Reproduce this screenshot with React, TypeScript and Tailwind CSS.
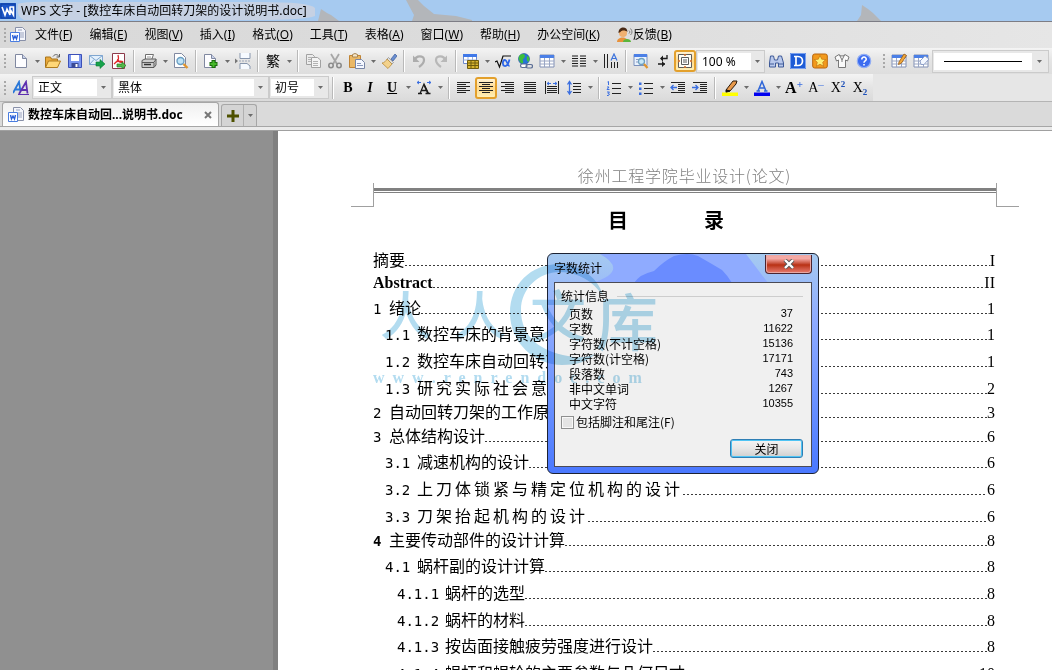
import type { ReactNode } from 'react';

const menus = [
  { label: '文件', accel: 'F' },
  { label: '编辑', accel: 'E' },
  { label: '视图', accel: 'V' },
  { label: '插入', accel: 'I' },
  { label: '格式', accel: 'O' },
  { label: '工具', accel: 'T' },
  { label: '表格', accel: 'A' },
  { label: '窗口', accel: 'W' },
  { label: '帮助', accel: 'H' },
  { label: '办公空间', accel: 'K' },
];

const toc = [
  { num: '', title: '摘要', page: 'I', row: 'h-6', indent: '' },
  { num: '', title: 'Abstract', page: 'II', row: 'h-6', indent: '', latin: true },
  { num: '1', title: '绪论', page: '1', row: 'h-6', indent: '' },
  { num: '1.1', title: '数控车床的背景意义', page: '1', row: 'h-[26px]', indent: 'pl-3' },
  { num: '1.2', title: '数控车床自动回转刀架', page: '1', row: 'h-[27px]', indent: 'pl-3' },
  { num: '1.3', title: '研究实际社会意义', page: '2', row: 'h-[27px]', indent: 'pl-3', spaced: true },
  { num: '2', title: '自动回转刀架的工作原理', page: '3', row: 'h-6', indent: '' },
  { num: '3', title: '总体结构设计', page: '6', row: 'h-6', indent: '' },
  { num: '3.1', title: '减速机构的设计', page: '6', row: 'h-[26px]', indent: 'pl-3' },
  { num: '3.2', title: '上刀体锁紧与精定位机构的设计', page: '6', row: 'h-[27px]', indent: 'pl-3', spaced: true },
  { num: '3.3', title: '刀架抬起机构的设计', page: '6', row: 'h-[27px]', indent: 'pl-3', spaced: true },
  { num: '4', title: '主要传动部件的设计计算', page: '8', row: 'h-6', indent: '', boldNum: true },
  { num: '4.1', title: '蜗杆副的设计计算', page: '8', row: 'h-[26px]', indent: 'pl-3' },
  { num: '4.1.1', title: '蜗杆的选型', page: '8', row: 'h-[27px]', indent: 'pl-6' },
  { num: '4.1.2', title: '蜗杆的材料', page: '8', row: 'h-[27px]', indent: 'pl-6' },
  { num: '4.1.3', title: '按齿面接触疲劳强度进行设计', page: '8', row: 'h-[26px]', indent: 'pl-6' },
  { num: '4.1.4', title: '蜗杆和蜗轮的主要参数与几何尺寸', page: '10', row: 'h-[27px]', indent: 'pl-6' },
];

const stats = [
  { label: '页数', value: '37' },
  { label: '字数', value: '11622' },
  { label: '字符数(不计空格)', value: '15136' },
  { label: '字符数(计空格)', value: '17171' },
  { label: '段落数', value: '743' },
  { label: '非中文单词', value: '1267' },
  { label: '中文字符', value: '10355' },
];

function Icon({ children }: { children: ReactNode }) {
  return (
    <svg viewBox="0 0 16 16" className="w-4 h-4 shrink-0" fill="none" aria-hidden="true">
      {children}
    </svg>
  );
}

function Tool({ name, active, children }: { name: string; active?: boolean; children: ReactNode }) {
  return (
    <button
      type="button"
      aria-label={name}
      className={
        active
          ? 'w-[22px] h-[22px] shrink-0 flex items-center justify-center rounded-[3px] border-2 border-[#e3a02c] bg-linear-to-b from-[#fff3d6] via-[#ffd98a] to-[#fff0b8]'
          : 'w-[22px] h-[22px] shrink-0 flex items-center justify-center'
      }
    >
      {children}
    </button>
  );
}

function Triangle() {
  return (
    <svg viewBox="0 0 5 3" className="w-[5px] h-[3px] shrink-0" aria-hidden="true">
      <path d="M0 0h5L2.500 3z" fill="#6b6b6b" />
    </svg>
  );
}

function Drop({ name }: { name: string }) {
  return (
    <button type="button" aria-label={name} className="w-[10px] h-[22px] shrink-0 flex items-center justify-center">
      <Triangle />
    </button>
  );
}

function Sep() {
  return (
    <div className="w-2 h-[22px] shrink-0 flex justify-center">
      <div className="w-px bg-[#b9b9b9]" />
      <div className="w-px bg-white" />
    </div>
  );
}

function Grip() {
  return (
    <div className="w-[10px] shrink-0 flex flex-col items-center gap-[2px]">
      <span className="w-[2px] h-[2px] bg-[#a8a8a8]" />
      <span className="w-[2px] h-[2px] bg-[#a8a8a8]" />
      <span className="w-[2px] h-[2px] bg-[#a8a8a8]" />
      <span className="w-[2px] h-[2px] bg-[#a8a8a8]" />
    </div>
  );
}

function Combo({ name, value, width, field }: { name: string; value: string; width: string; field: string }) {
  return (
    <div className={`${width} h-[23px] shrink-0 flex items-center border border-[#cbcbcb] bg-[#e8e8e8] p-px`}>
      <select
        aria-label={name}
        defaultValue={value}
        className={`${field} h-[17px] appearance-none bg-white pl-1 text-[12px] leading-[17px] text-black`}
      >
        <option>{value}</option>
      </select>
      <span className="flex-1 flex justify-center">
        <Triangle />
      </span>
    </div>
  );
}

function Sheet({ x = 2 }: { x?: number }) {
  return (
    <>
      <path d={`M${x}.5 1.5h7l4 4v9h-11z`} fill="#fdfdff" stroke="#8088a0" />
      <path d={`M${x + 7}.5 1.5v4h4`} fill="#c9d2ea" stroke="#8088a0" />
    </>
  );
}

function GridShape() {
  return (
    <>
      <path d="M1 2h14v12H1z" fill="#fff" stroke="#8190b5" />
      <path d="M1 2h14v3H1z" fill="#4b7fe6" />
      <path d="M1 8h14M1 11h14M5.5 5v9M10.5 5v9" stroke="#9aa6c4" />
    </>
  );
}

function DocIcon() {
  return (
    <Icon>
      <path d="M5.5.5h7l3 3v10h-10z" fill="#f4f6fc" stroke="#8890a8" />
      <path d="M8 3h4M10 6h4M10 8h4M10 10h4" stroke="#9aa3bd" />
      <path d="M.5 5.500h9v9h-9z" fill="#fff" stroke="#4a7de0" />
      <path d="M2.500 8l1 4 1.500-3 1.500 3 1-4" stroke="#2b60d8" strokeWidth="1.4" />
    </Icon>
  );
}

function TitleBar() {
  return (
    <header className="relative h-[22px] shrink-0 flex items-center bg-[#a6caf0] border-b border-[#7d7d85]">
      <svg viewBox="0 0 1052 21" preserveAspectRatio="none" className="absolute inset-0 w-full h-[21px]" aria-hidden="true">
        <path d="M18 4Q24 1 60 2h200q50 0 55 6v8q-10 4-60 4H24q-8-3-6-16z" fill="#c6d1e3" />
        <path d="M318 21l3-12 6 4 4 2 8 6z" fill="#b3b6ba" />
        <path d="M406 0h12l6 6 10 8 22 2 16 4v1h-60l2-6z" fill="#b3b6ba" />
        <path d="M857 21l4-6 1-10 6 4 5 4 8 8z" fill="#b3b6ba" />
      </svg>
      <div className="relative flex items-center gap-[5px]">
        <svg viewBox="0 0 16 16" className="w-4 h-4" fill="none" aria-hidden="true">
          <path d="M0 0h16v16H0z" fill="#1c56c8" />
          <path d="M1 1h14v14H1z" stroke="#0f3f9c" />
          <path d="M2 4l3 8 2-6 3 6V4M9.500 4h4v8l-3-5" stroke="#fff" strokeWidth="1.600" />
        </svg>
        <h1 className="text-[12px] leading-4 whitespace-nowrap text-black">WPS 文字 - [数控车床自动回转刀架的设计说明书.doc]</h1>
      </div>
    </header>
  );
}

function MenuBar() {
  return (
    <nav className="h-[26px] shrink-0 flex items-center bg-linear-to-r from-[#d9d9d9] via-[#dcdcdc] to-[#e6e6e6]">
      <Grip />
      <span className="w-[25px] flex items-center">
        <DocIcon />
      </span>
      <div className="flex items-center gap-[17px]">
        {menus.map((m) => (
          <button key={m.accel} type="button" className="text-[12px] leading-4 whitespace-nowrap">
            {m.label}(<span className="underline">{m.accel}</span>)
          </button>
        ))}
        <button type="button" className="text-[12px] leading-4 whitespace-nowrap flex items-center">
          <Icon>
            <circle cx="6" cy="6" r="4" fill="#f0b070" />
            <path d="M1.500 6c0-7 9-7 9-1-2-2-6-2-7 0z" fill="#4a2a14" />
            <path d="M0 15c0-6 11-6 11 0z" fill="#e8913a" />
            <path d="M6 15c0-4 8-4 8 0z" fill="#5bb53c" />
            <path d="M12 6.500c1-1 1-2 0-3M13.500 8c2-2 2-4 0-6.500" stroke="#7d7d7d" />
          </Icon>
          反馈(<span className="underline">B</span>)
        </button>
      </div>
    </nav>
  );
}

function StandardBar() {
  return (
    <div className="h-[26px] shrink-0 flex items-center bg-linear-to-b from-[#f4f4f4] via-[#e4e4e4] to-[#dedede]">
      <Grip />
      <Tool name="新建">
        <Icon><Sheet /></Icon>
      </Tool>
      <Drop name="新建选项" />
      <Tool name="打开">
        <Icon>
          <path d="M.5 14V4h5l1 2h6v8z" fill="#e9a93a" stroke="#a8741a" />
          <path d="M.5 14.500L3.500 8h12l-3 6.500z" fill="#ffd777" stroke="#b07c1f" />
          <path d="M8 3.500c2-3 5-2 6 0M14.500 1v3h-3" stroke="#5c5c5c" />
        </Icon>
      </Tool>
      <Tool name="保存">
        <Icon>
          <path d="M1.500 1.500h13v13h-13z" fill="#7a96f0" stroke="#3c50b8" />
          <path d="M4 2h8v6H4z" fill="#fff" />
          <path d="M4.500 10h7v4.500h-7z" fill="#3a4a94" />
          <path d="M8.500 11h2v3h-2z" fill="#fff" />
        </Icon>
      </Tool>
      <Tool name="发送邮件">
        <Icon>
          <path d="M.5 2.500h13v9H.5z" fill="#e3f0fc" stroke="#7fa6d0" />
          <path d="M.5 2.500l6.500 5 6.500-5M.5 11.500l4.500-5" stroke="#7fa6d0" />
          <path d="M7 9h4V6.500l5 4.500-5 4.500V13H7z" fill="#17a34b" stroke="#0b7a34" strokeWidth=".6" />
        </Icon>
      </Tool>
      <Tool name="输出为 PDF">
        <Icon>
          <path d="M1.500.5h12v15h-12z" fill="#fff" stroke="#8c3a4a" />
          <path d="M7 2c1 4 1 5-4 9M6.500 6c1 3 3 4 6 3M4 9.500c2-1 5-2 8-1" stroke="#e02828" strokeWidth="1.300" />
          <path d="M6 11h5V9l4 3.500-4 3.500v-2H6z" fill="#54b848" stroke="#1f7d24" strokeWidth=".7" />
        </Icon>
      </Tool>
      <Sep />
      <Tool name="打印">
        <Icon>
          <path d="M4.500 7V1.500h8l-2 5.500z" fill="#fff" stroke="#6f6f6f" />
          <path d="M1 7.500l3-1.500h11v6l-2 2.500H1z" fill="#cfcfcf" stroke="#5a5a5a" />
          <path d="M1 9.500h12M13 9.500V14M13 9l2-2.500" stroke="#5a5a5a" />
          <path d="M3 11.500h7" stroke="#333" strokeWidth="1.500" />
          <path d="M6 4h4" stroke="#9a9a9a" />
        </Icon>
      </Tool>
      <Drop name="打印选项" />
      <Tool name="打印预览">
        <Icon>
          <path d="M1.500.5h7l4 4v10h-11z" fill="#fff" stroke="#8088a0" />
          <circle cx="7.500" cy="8" r="3.500" fill="#bfe3f7" stroke="#6a9ec2" strokeWidth="1.400" />
          <path d="M10.500 11l4 4" stroke="#e0952e" strokeWidth="2.400" />
        </Icon>
      </Tool>
      <Sep />
      <Tool name="插入页">
        <Icon>
          <Sheet x={1} />
          <path d="M10.500 7v8M6.500 11h8" stroke="#1a6d0c" strokeWidth="4" />
          <path d="M10.500 8v6M7.500 11h6" stroke="#46b82a" strokeWidth="2" />
        </Icon>
      </Tool>
      <Drop name="插入页选项" />
      <Tool name="分页符">
        <Icon>
          <path d="M5 0v5.500h10V0" fill="#f6faff" stroke="#8796ad" />
          <path d="M5 16v-5.500h7l3 2.500v3" fill="#f6faff" stroke="#8796ad" />
          <path d="M4 8h12" stroke="#9aa5b8" strokeDasharray="2 1" />
          <path d="M0 5.500L3 8l-3 2.500z" fill="#777" />
        </Icon>
      </Tool>
      <Sep />
      <Tool name="繁体">
        <span className="text-[14px] leading-4">繁</span>
      </Tool>
      <Drop name="繁体选项" />
      <Sep />
      <Tool name="复制">
        <Icon>
          <path d="M1.500 1.500h6l2 2v8h-8z" fill="#ececec" stroke="#a2a2a2" />
          <path d="M6.500 4.500h6l3 2.500v7.500h-9z" fill="#f4f4f4" stroke="#a2a2a2" />
          <path d="M3 4.500h3M3 6.500h3M3 8.500h3M8 8.500h5M8 10.500h5M8 12.500h5" stroke="#b2b2b2" />
        </Icon>
      </Tool>
      <Tool name="剪切">
        <Icon>
          <path d="M4 1l6 10M12 1L6 11" stroke="#a6a6a6" strokeWidth="1.800" />
          <circle cx="4" cy="12.500" r="2.200" stroke="#8c8c8c" strokeWidth="1.600" />
          <circle cx="12" cy="12.500" r="2.200" stroke="#8c8c8c" strokeWidth="1.600" />
        </Icon>
      </Tool>
      <Tool name="粘贴">
        <Icon>
          <path d="M.5 2.500h11v12H.5z" fill="#eab867" stroke="#c08434" />
          <path d="M3.500 4V1.500L6 .5l2.500 1V4z" fill="#f6e8cc" stroke="#a88450" />
          <path d="M6.500 6.500h6l3 3v6h-9z" fill="#f5f8ff" stroke="#7886a6" />
          <path d="M8 10.500h4M8 12.500h6" stroke="#8c9abb" />
        </Icon>
      </Tool>
      <Drop name="粘贴选项" />
      <Tool name="格式刷">
        <Icon>
          <path d="M10 6l4-5 2 2-4 5z" fill="#6a8ed0" stroke="#3c5c9c" strokeWidth=".7" />
          <path d="M7.500 4.500l5 5-1.500 1.500-5-5z" fill="#ddd" stroke="#888" strokeWidth=".7" />
          <path d="M6 6l5 5-4 4.500-6-5.500c2 0 4-2 5-4z" fill="#f3d28c" stroke="#b98d3e" strokeWidth=".8" />
        </Icon>
      </Tool>
      <Sep />
      <Tool name="撤消">
        <Icon>
          <path d="M3.500 7.500C5 2 13 2 13 7c0 3-2 5-5 7" stroke="#adadad" strokeWidth="2.200" />
          <path d="M2 2.500v6.500h6.500z" fill="#adadad" />
        </Icon>
      </Tool>
      <Tool name="恢复">
        <Icon>
          <path d="M12.500 7.500C11 2 3 2 3 7c0 3 2 5 5 7" stroke="#b8b8b8" strokeWidth="2.200" />
          <path d="M14 2.500v6.500H7.500z" fill="#b8b8b8" />
        </Icon>
      </Tool>
      <Sep />
      <Tool name="插入表格">
        <Icon>
          <path d="M.5 1.500h13v9H.5z" fill="#fff" stroke="#6b88cc" />
          <path d="M0 1h14v3H0z" fill="#3f78e8" />
          <path d="M.5 7h13M5 4v7M9.500 4v7" stroke="#9ab0dc" />
          <path d="M4.500 7.500h11v8h-11z" fill="#d8b52e" stroke="#6f5c0c" />
          <path d="M4.500 10h11M4.500 12.500h11M8 7.500v8M12 7.500v8" stroke="#6f5c0c" />
        </Icon>
      </Tool>
      <Drop name="插入表格选项" />
      <Tool name="公式">
        <Icon>
          <path d="M0 9l2-1 2.500 6L8 3h8" stroke="#111" strokeWidth="1.200" />
          <path d="M14.500 6.500c-1 4-3 7-5 6.500-2.500-1-2-6 .5-6 2 0 2.500 6 4.500 6" stroke="#2c66e8" strokeWidth="1.800" />
        </Icon>
      </Tool>
      <Tool name="超链接">
        <Icon>
          <circle cx="7" cy="6" r="5.500" fill="#2673d8" stroke="#1c4f94" strokeWidth=".6" />
          <path d="M3 2c3-2 5-1 5 1S5 6 6 8s-1 3-2 2S0 5 3 2zM10 3c2 0 3 3 2 5s-3-1-2-5z" fill="#3cbf3c" />
          <rect x="3.500" y="11" width="6.500" height="3.500" rx="1.700" fill="#fff" stroke="#5d6f96" strokeWidth="1.200" />
          <rect x="9" y="11.500" width="6.500" height="3.500" rx="1.700" stroke="#5d6f96" strokeWidth="1.200" />
        </Icon>
      </Tool>
      <Tool name="表格">
        <Icon><GridShape /></Icon>
      </Tool>
      <Drop name="表格选项" />
      <Tool name="分栏">
        <Icon>
          <path d="M1 3h6M1 5.500h6M1 8h6M1 10.500h6M1 13h6M9 3h6M9 5.500h6M9 8h6M9 10.500h6M9 13h6" stroke="#1b1b1b" strokeWidth="1.200" />
        </Icon>
      </Tool>
      <Drop name="分栏选项" />
      <Tool name="文字方向">
        <Icon>
          <path d="M1.500 1v14M4.500 1v14M8.500 9v6M11.500 9v6M14.500 9v6" stroke="#222" />
          <path d="M8 7.500L11 1l3 6.500M9 5.500h4" stroke="#3e74dc" strokeWidth="1.200" />
        </Icon>
      </Tool>
      <Sep />
      <Tool name="文档结构图">
        <Icon>
          <path d="M1 1.500h13v11H1z" fill="#e9f2fd" stroke="#7a90bd" />
          <path d="M1 1h13v3H1z" fill="#4b7fe6" />
          <path d="M3 6.500h3M3 9h3" stroke="#8a9cc4" />
          <circle cx="8.500" cy="8.500" r="3" fill="#c8e8f8" stroke="#6fa0c0" strokeWidth="1.300" />
          <path d="M11 11l3.500 4" stroke="#e0952e" strokeWidth="2.200" />
        </Icon>
      </Tool>
      <Tool name="显示段落标记">
        <Icon>
          <path d="M12 2v3.500H6M3 11h7" stroke="#1b1b1b" strokeWidth="1.300" />
          <path d="M8 2.500v6L5 5.500zM7 8v6l3-3z" fill="#1b1b1b" />
        </Icon>
      </Tool>
      <Tool name="页面视图" active>
        <Icon>
          <path d="M1.500 1.500h13v13h-13z" fill="#fffdf6" stroke="#5c5c5c" />
          <path d="M4.500 4.500h7v7h-7z" fill="#fff" stroke="#5c5c5c" />
          <path d="M6 7h4M6 9h4" stroke="#5c5c5c" />
          <path d="M7 1l1 2 1-2M7 15l1-2 1 2M1 7l2 1-2 1M15 7l-2 1 2 1" stroke="#d8742c" />
        </Icon>
      </Tool>
      <Combo name="显示比例" value="100 %" width="w-[69px]" field="w-[53px]" />
      <Tool name="查找">
        <Icon>
          <path d="M2.500 3h3l1 4h3l1-4h3l2 7v4h-5v-4h-3v4h-6v-4z" fill="#b9c9ec" stroke="#3f5a98" />
          <path d="M1 11h5M10 11h5" stroke="#3f5a98" />
        </Icon>
      </Tool>
      <Tool name="词典">
        <Icon>
          <path d="M0 0h16v16H0z" fill="#1d5bd6" />
          <path d="M.5.5h15v15H.5z" stroke="#7aa0ee" />
          <path d="M4 3.500h4c6 0 6 9 0 9H4M6 4v8" stroke="#fff" strokeWidth="1.700" />
        </Icon>
      </Tool>
      <Tool name="收藏">
        <Icon>
          <rect x=".7" y="1" width="14.600" height="14" rx="2" fill="#f29a1c" stroke="#b8640c" />
          <path d="M8 2.500l1.700 3.700 4 .4-3 2.700.9 4L8 11.200l-3.600 2.100.9-4-3-2.700 4-.4z" fill="#fff176" stroke="#b8640c" strokeWidth=".6" />
        </Icon>
      </Tool>
      <Tool name="换肤">
        <Icon>
          <path d="M5 1.500L1 4l1.500 4L4.500 7v7.500h7V7l2 1L15 4l-4-2.500c-1 2-5 2-6 0z" fill="#fafafa" stroke="#787878" />
          <path d="M5.500 2l2.500 5 2.500-5M8 7v2" stroke="#787878" />
        </Icon>
      </Tool>
      <Tool name="帮助">
        <Icon>
          <circle cx="8" cy="8" r="6.700" fill="#3c6cf0" stroke="#92aef4" strokeWidth="1.200" />
          <path d="M5.800 6.500c0-3.500 4.700-3 4.400 0-.1 1.500-2.200 1.500-2.200 3.200M8 11v1.600" stroke="#fff" strokeWidth="1.600" />
        </Icon>
      </Tool>
      <span className="w-[13px] pl-1 flex shrink-0">
        <Grip />
      </span>
      <Tool name="绘制表格">
        <Icon>
          <GridShape />
          <path d="M8 9l5-8 2.500 1.500L10.500 10l-3 1.500z" fill="#f0a83c" stroke="#9c5c14" strokeWidth=".8" />
        </Icon>
      </Tool>
      <Tool name="擦除">
        <Icon>
          <GridShape />
          <path d="M7 8l5-5 4 3-5 5.500H8z" fill="#f3f7ff" stroke="#8ea0c8" />
        </Icon>
      </Tool>
      <div className="flex-1 h-[23px] flex items-center border border-[#cbcbcb] bg-[#e8e8e8] p-px mr-[3px]">
        <button type="button" aria-label="线型" className="flex-1 h-[17px] bg-white flex items-center px-[10px]">
          <span className="flex-1 h-px bg-black" />
        </button>
        <span className="w-[15px] flex justify-center">
          <Triangle />
        </span>
      </div>
    </div>
  );
}

function FormatBar() {
  return (
    <div className="h-7 shrink-0 flex bg-[#e6e6e6] border-b border-[#b4b4b4]">
      <div className="flex items-center pr-[2px] bg-linear-to-b from-[#f4f4f4] via-[#e4e4e4] to-[#dadada]">
        <Grip />
        <Tool name="样式">
          <Icon>
            <path d="M0 13L6 2l1.500 9M2 9.500h5" stroke="#2a78d8" strokeWidth="1.800" />
            <path d="M6 14L13 2l1.500 11.500M8.500 10h6" stroke="#5d2fb0" strokeWidth="1.800" />
            <path d="M5 14.500h11" stroke="#5d2fb0" />
          </Icon>
        </Tool>
        <Combo name="样式" value="正文" width="w-[80px]" field="w-[63px]" />
        <Combo name="字体" value="黑体" width="w-[157px]" field="w-[140px]" />
        <Combo name="字号" value="初号" width="w-[60px]" field="w-[43px]" />
        <Sep />
        <Tool name="加粗">
          <b className="font-['Liberation_Serif',serif] text-[14px] leading-4">B</b>
        </Tool>
        <Tool name="倾斜">
          <i className="font-['Liberation_Serif',serif] font-bold text-[14px] leading-4">I</i>
        </Tool>
        <Tool name="下划线">
          <u className="font-['Liberation_Serif',serif] font-bold text-[14px] leading-4">U</u>
        </Tool>
        <Drop name="下划线选项" />
        <Tool name="字符缩放">
          <Icon>
            <path d="M4 13.500L8 4l4.500 9.500" stroke="#1b1b1b" strokeWidth="1.200" />
            <path d="M8 5l4 8.500M5 10.500h6M2 13.500h4M9.500 13.500h5" stroke="#1b1b1b" strokeWidth="1.600" />
            <path d="M1 2.500h4M11 2.500h4M3 1L1 2.500 3 4M13 1l2 1.500L13 4" stroke="#3a6ee0" />
          </Icon>
        </Tool>
        <Drop name="字符缩放选项" />
        <Sep />
        <Tool name="左对齐">
          <Icon><path d="M1 2.500h13M1 4.500h9M1 6.500h13M1 8.500h9M1 10.500h13M1 12.500h9" stroke="#222" /></Icon>
        </Tool>
        <Tool name="居中" active>
          <Icon><path d="M1 2.500h14M4 4.500h8M1 6.500h14M4 8.500h8M1 10.500h14M4 12.500h8" stroke="#222" /></Icon>
        </Tool>
        <Tool name="右对齐">
          <Icon><path d="M1 2.500h13M5 4.500h9M1 6.500h13M5 8.500h9M1 10.500h13M5 12.500h9" stroke="#222" /></Icon>
        </Tool>
        <Tool name="两端对齐">
          <Icon><path d="M2 2.500h12M2 4.500h12M2 6.500h12M2 8.500h12M2 10.500h12M2 12.500h12" stroke="#222" /></Icon>
        </Tool>
        <Tool name="分散对齐">
          <Icon>
            <path d="M1.500 1v13M14.500 1v13M3 6.500h10M3 8.500h10M3 10.500h10M3 12.500h10" stroke="#222" />
            <path d="M3 3.500h4M9 3.500h4M5 2L3 3.500 5 5M11 2l2 1.500L11 5" stroke="#3a6ee0" />
          </Icon>
        </Tool>
        <Tool name="行距">
          <Icon>
            <path d="M7 3.500h8M7 6.500h8M7 9.500h8M7 12.500h8" stroke="#222" />
            <path d="M3.500 2v12M1.500 4.500l2-3 2 3M1.500 11l2 3 2-3" stroke="#3a6ee0" strokeWidth="1.300" />
          </Icon>
        </Tool>
        <Drop name="行距选项" />
        <Sep />
        <Tool name="编号">
          <Icon>
            <path d="M6 3.500h9M6 8.500h9M6 13.500h9" stroke="#222" />
            <path d="M1.500 2l1-.5v3.500M1 7h2L1 9.500h2.500M1 12h2.500L2 13.500l1.500.5-1 1.500H1" stroke="#3a6ee0" />
          </Icon>
        </Tool>
        <Drop name="编号选项" />
        <Tool name="项目符号">
          <Icon>
            <path d="M6 3.500h9M6 8.500h9M6 13.500h9" stroke="#222" />
            <path d="M1 2.500h2.500v2.500H1zM1 7.500h2.500V10H1zM1 12.500h2.500V15H1z" fill="#3a6ee0" />
          </Icon>
        </Tool>
        <Drop name="项目符号选项" />
        <Tool name="减少缩进量">
          <Icon>
            <path d="M1 2.500h14M8 4.500h7M8 6.500h7M8 8.500h7M8 10.500h7M1 12.500h14" stroke="#222" />
            <path d="M7 7.500H1M3.500 5L1 7.500 3.500 10" stroke="#3a6ee0" strokeWidth="1.300" />
          </Icon>
        </Tool>
        <Tool name="增加缩进量">
          <Icon>
            <path d="M1 2.500h14M8 4.500h7M8 6.500h7M8 8.500h7M8 10.500h7M1 12.500h14" stroke="#222" />
            <path d="M0 7.500h6M3.500 5L6 7.500 3.500 10" stroke="#3a6ee0" strokeWidth="1.300" />
          </Icon>
        </Tool>
        <Sep />
        <Tool name="突出显示">
          <Icon>
            <path d="M4 10l7-9h4l-1 3-6 7z" fill="#e8994a" stroke="#2a1a0c" />
            <path d="M4 10l4 1-4 1.500z" fill="#111" stroke="#111" />
            <path d="M0 12.500h16V16H0z" fill="#ffff00" />
          </Icon>
        </Tool>
        <Drop name="突出显示选项" />
        <Tool name="字体颜色">
          <Icon>
            <path d="M4 11L8 1.500 12 11M5 8h6M2.500 11h3.500M10 11h3.500" stroke="#2f66d8" strokeWidth="1.500" />
            <path d="M0 12.500h16V16H0z" fill="#0000f0" />
          </Icon>
        </Tool>
        <Drop name="字体颜色选项" />
        <Tool name="增大字号">
          <span className="flex items-start font-['Liberation_Serif',serif] font-bold text-[16px] leading-4">
            A<span className="text-[11px] leading-[8px] text-[#3a6ee0]">+</span>
          </span>
        </Tool>
        <Tool name="减小字号">
          <span className="flex items-start font-['Liberation_Serif',serif] text-[14px] leading-4">
            A<span className="text-[11px] leading-[8px] text-[#3a6ee0]">–</span>
          </span>
        </Tool>
        <Tool name="上标">
          <span className="flex items-start font-['Liberation_Serif',serif] text-[14px] leading-4">
            X<span className="text-[9px] leading-[8px] font-bold text-[#1c4fb8]">2</span>
          </span>
        </Tool>
        <Tool name="下标">
          <span className="flex items-end font-['Liberation_Serif',serif] text-[14px] leading-4">
            X<span className="text-[9px] leading-[8px] font-bold text-[#1c4fb8]">2</span>
          </span>
        </Tool>
      </div>
    </div>
  );
}

function TabStrip() {
  return (
    <div className="h-[29px] shrink-0 flex flex-col bg-[#dadada]">
      <div className="flex-1 flex items-end border-b border-[#a6a6a6] pl-[2px]">
        <div className="w-[217px] h-6 flex items-center gap-1 rounded-t-[3px] border border-b-0 border-[#a6a6a6] bg-linear-to-b from-[#f0f0f0] to-white pl-[5px] pr-[5px]">
          <DocIcon />
          <button type="button" className="flex-1 text-left text-[12px] leading-4 font-bold whitespace-nowrap">
            数控车床自动回...说明书.doc
          </button>
          <button type="button" aria-label="关闭标签" className="w-[10px] h-[10px] flex items-center justify-center">
            <svg viewBox="0 0 8 8" className="w-2 h-2" aria-hidden="true">
              <path d="M1 1l6 6M7 1L1 7" stroke="#777" strokeWidth="2" />
            </svg>
          </button>
        </div>
        <div className="ml-[2px] h-[22px] flex rounded-t-[3px] border border-b-0 border-[#a6a6a6] bg-[#d4d4d4]">
          <button type="button" aria-label="新建标签" className="w-[22px] flex items-center justify-center border-r border-[#b0b0b0]">
            <svg viewBox="0 0 12 12" className="w-3 h-3" aria-hidden="true">
              <path d="M6 0v12M0 6h12" stroke="#4f5200" strokeWidth="3" />
            </svg>
          </button>
          <button type="button" aria-label="标签列表" className="w-3 flex items-center justify-center">
            <Triangle />
          </button>
        </div>
      </div>
      <div className="h-1 bg-[#ebebeb] border-b border-[#a0a0a0]" />
    </div>
  );
}

function DocumentPage() {
  return (
    <article className="flex-1 min-w-0 bg-white pt-[37px] text-black">
      <p className="pl-[95px] pr-14 text-center text-[16px] leading-[15px] tracking-wider text-[#808080] font-light">
        徐州工程学院毕业设计(论文)
      </p>
      {/* page margin marks with the double header rule between them */}
      <div className="h-6 flex pl-[73px] pr-[33px]">
        <div className="w-[23px] border-b border-r border-[#a0a0a0]" />
        <div className="flex-1 pt-[5px]">
          <div className="h-[5px] border-t-[3px] border-b border-[#808080]" />
        </div>
        <div className="w-[23px] border-b border-l border-[#a0a0a0]" />
      </div>
      <h2 className="h-[26px] mb-[14px] pl-[95px] pr-[93px] flex justify-center gap-[76px] text-[20px] leading-[26px] font-bold">
        <span>目</span>
        <span>录</span>
      </h2>
      <ol className="pl-[95px] pr-14">
        {toc.map((item) => (
          <li key={item.title} className={`${item.row} ${item.indent} flex items-end`}>
            <div className="flex-1 h-6 flex items-baseline text-[16px] leading-6 whitespace-nowrap">
              {item.num && (
                <span
                  className={`${item.num.length === 1 ? 'w-4' : item.num.length === 3 ? 'w-8' : 'w-12'} ${
                    item.boldNum ? 'font-bold' : ''
                  } font-['DejaVu_Sans_Mono',monospace] text-[14px]`}
                >
                  {item.num}
                </span>
              )}
              <span
                className={
                  item.latin
                    ? "font-['Liberation_Serif',serif] font-bold"
                    : item.spaced
                      ? 'tracking-[3px]'
                      : ''
                }
              >
                {item.title}
              </span>
              <span className="flex-1 h-px bg-[repeating-linear-gradient(90deg,#3a3a3a_0_2px,transparent_2px_4px)]" />
              <span className="pr-px font-['Liberation_Serif',serif]">{item.page}</span>
            </div>
          </li>
        ))}
      </ol>
    </article>
  );
}

function WordCountDialog() {
  return (
    <section
      role="dialog"
      aria-label="字数统计"
      className="absolute left-[547px] top-[122px] w-[272px] overflow-hidden rounded-[6px] border border-[#1c2233] bg-linear-to-b from-[#a6caf0] via-[#8fabff] via-30% to-[#4a78ff] px-[6px] pt-px pb-[6px]"
    >
      <svg viewBox="0 0 270 29" className="absolute left-0 top-0 w-[270px] h-[29px]" aria-hidden="true">
        <path d="M52 0h146l22 29H44q38-12 8-29z" fill="#8fabff" />
        <path d="M86 29q6-9 20-12 10-10 20-15 14-4 24 0 14 8 24 14 6 6 10 13z" fill="#6a8cff" />
      </svg>
      <header className="relative h-[27px] flex items-start justify-between">
        <h3 className="pt-[5px] text-[12px] leading-4">字数统计</h3>
        <button
          type="button"
          aria-label="关闭窗口"
          className="w-[47px] h-[19px] flex items-center justify-center rounded-b-[4px] border border-t-0 border-[#4a2430] bg-linear-to-b from-[#f4a8a4] from-20% via-[#b83010] via-55% to-[#e87c70] shadow-[inset_0_0_0_1px_#e8a8a4]"
        >
          <svg viewBox="0 0 12 10" className="w-3 h-[10px]" aria-hidden="true">
            <path d="M2 1l8 8M10 1L2 9" stroke="#555" strokeWidth="4" />
            <path d="M2 1l8 8M10 1L2 9" stroke="#fff" strokeWidth="2.400" />
          </svg>
        </button>
      </header>
      <div className="relative border border-[#4a4a55] bg-[#f0f0f0] pt-[5px] pl-[6px] pr-2 pb-2">
        <div className="flex items-center gap-2 text-[12px] leading-4">
          统计信息
          <span className="flex-1 h-px bg-[#cdcdcd]" />
        </div>
        <table className="w-full mt-[2px] text-[12px]">
          <tbody>
            {stats.map((s) => (
              <tr key={s.label} className="h-[15px] leading-[15px]">
                <th scope="row" className="p-0 pl-2 text-left font-normal">{s.label}</th>
                <td className="p-0 pr-[10px] text-right font-['Liberation_Sans',sans-serif] text-[11px]">{s.value}</td>
              </tr>
            ))}
          </tbody>
        </table>
        <label className="mt-[3px] flex items-center gap-[2px] text-[12px] leading-4">
          <input type="checkbox" className="w-[13px] h-[13px] appearance-none border border-[#8e8f8f] bg-[#e4e4e4] shadow-[inset_0_0_0_1px_#f8f8f8]" />
          包括脚注和尾注(F)
        </label>
        <div className="mt-[9px] flex justify-end">
          <button
            type="button"
            className="w-[73px] h-[19px] flex items-center justify-center rounded-[3px] border border-[#2f7fb5] bg-linear-to-b from-[#f4f4f4] via-[#e6e6e6] to-[#cfcfcf] text-[12px] leading-4 shadow-[inset_0_0_0_1px_#4fc4f4]"
          >
            关闭
          </button>
        </div>
      </div>
    </section>
  );
}

function Watermark() {
  return (
    <svg
      viewBox="0 0 290 130"
      className="absolute left-[370px] top-[122px] w-[290px] h-[130px] pointer-events-none mix-blend-multiply"
      fill="#b3dcf0"
      aria-hidden="true"
    >
      <path d="M233 43C228 22 206 11 190 11C160 11 140 32 140 60C140 90 165 112 192 112C206 112 217 109 225 101C216 105 208 105 198 103C170 98 151 84 151 57C151 36 168 19 190 19C208 19 223 28 233 43z" />
      <g fontFamily="'Noto Sans CJK SC', sans-serif" fontWeight="500">
        <text x="10" y="82" fontSize="52">人</text>
        <text x="84" y="82" fontSize="52">人</text>
        <text x="160" y="84" fontSize="56">文</text>
        <text x="226" y="93" fontSize="62">库</text>
      </g>
      <text x="3" y="130" fontFamily="'Liberation Serif', serif" fontSize="16" fontWeight="bold" xmlSpace="preserve">
        w  w  w  .  r  e  n  r  e  n  d  o  c  .  c  o  m
      </text>
    </svg>
  );
}

export default function App() {
  return (
    <div className="h-screen flex flex-col overflow-hidden bg-[#909090] text-black font-['Noto_Sans','Noto_Sans_CJK_SC',sans-serif]">
      <TitleBar />
      <MenuBar />
      <StandardBar />
      <FormatBar />
      <TabStrip />
      <main className="relative flex-1 min-h-0 flex overflow-hidden font-['Noto_Sans_CJK_SC',sans-serif]">
        <div className="w-[278px] shrink-0 border-r-[5px] border-[#808080] bg-[#909090]" />
        <DocumentPage />
        <WordCountDialog />
        <Watermark />
      </main>
    </div>
  );
}
